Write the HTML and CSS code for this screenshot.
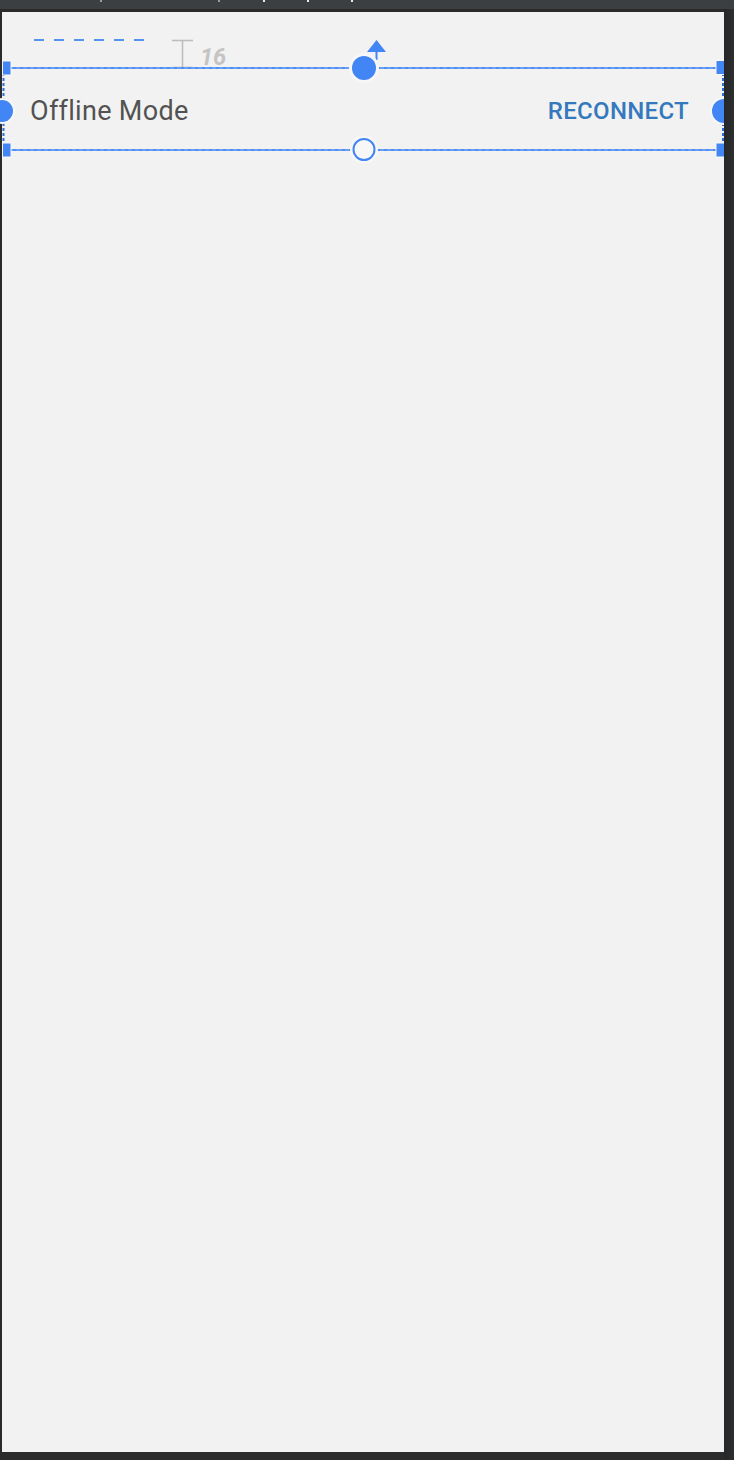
FILE: index.html
```html
<!DOCTYPE html>
<html lang="en">
<head>
<meta charset="utf-8">
<title>Offline Mode preview</title>
<link rel="stylesheet" href="styles.css">
</head>
<body>
<div class="topbar">
  <span class="tick tick-a"></span>
  <span class="tick tick-b"></span>
  <span class="tick tick-c"></span>
  <span class="tick tick-d"></span>
  <span class="tick tick-e"></span>
</div>
<div class="stage">
  <div class="canvas">
    <div class="banner">
      <span class="label">Offline Mode</span>
      <span class="action">RECONNECT</span>
    </div>
    <svg class="overlay" width="722" height="170" viewBox="0 0 722 170" aria-hidden="true">
      <!-- margin guide dashes -->
      <line x1="32" y1="28" x2="142" y2="28" stroke="#5592f5" stroke-width="2" stroke-dasharray="10 10"/>
      <!-- I-beam margin marker -->
      <g stroke="#bdbdbd" stroke-width="1.6">
        <line x1="170" y1="28.5" x2="191" y2="28.5"/>
        <line x1="180.5" y1="28.5" x2="180.5" y2="56"/>
        <line x1="170" y1="55.5" x2="191" y2="55.5"/>
      </g>
      <!-- selection bounds -->
      <line x1="0" y1="56" x2="722" y2="56" stroke="#4f8ff5" stroke-width="2.2"/>
      <line x1="0" y1="56" x2="722" y2="56" stroke="#a9c8fa" stroke-width="0.6" stroke-dasharray="4 3"/>
      <line x1="0" y1="138" x2="722" y2="138" stroke="#4f8ff5" stroke-width="2.2"/>
      <line x1="0" y1="138" x2="722" y2="138" stroke="#a9c8fa" stroke-width="0.6" stroke-dasharray="4 3"/>
      <line x1="1.5" y1="56" x2="1.5" y2="138" stroke="#2f6fd6" stroke-width="2" stroke-dasharray="3 2"/>
      <line x1="721" y1="56" x2="721" y2="138" stroke="#2f6fd6" stroke-width="2" stroke-dasharray="3 2"/>
      <!-- corner handles -->
      <g fill="#4285f4" stroke="#f7f7f7" stroke-width="1">
        <rect x="0.5" y="49" width="8.5" height="14"/>
        <rect x="0.5" y="131" width="8.5" height="14"/>
        <rect x="714" y="48.5" width="8.5" height="14"/>
        <rect x="714" y="131" width="8.5" height="14"/>
      </g>
      <!-- side anchors -->
      <circle cx="0" cy="99" r="13" fill="#f7f7f7"/>
      <circle cx="0" cy="99" r="11" fill="#4285f4"/>
      <circle cx="722" cy="99" r="14" fill="#f7f7f7"/>
      <circle cx="722" cy="99" r="12" fill="#4285f4"/>
      <!-- top anchor with arrow -->
      <polygon points="365,40 384,40 374.5,28" fill="#4285f4"/>
      <rect x="373.5" y="39" width="2" height="9" fill="#4285f4"/>
      <circle cx="362" cy="56" r="15" fill="#f7f7f7"/>
      <circle cx="362" cy="56" r="12" fill="#4285f4"/>
      <!-- bottom anchor -->
      <circle cx="362" cy="137.5" r="14" fill="#f7f7f7"/>
      <circle cx="362" cy="137.5" r="10.5" fill="#f7f7f7" stroke="#4285f4" stroke-width="2"/>
    </svg>
    <span class="margin-value">16</span>
  </div>
</div>
</body>
</html>
```

FILE: styles.css
```css
html, body {
  margin: 0;
  padding: 0;
}

body {
  width: 734px;
  height: 1460px;
  background: #2b2b2b;
  overflow: hidden;
  font-family: Roboto, "Noto Sans", "Liberation Sans", sans-serif;
}

.topbar {
  height: 9px;
  background: #3c3f41;
  display: flex;
  align-items: flex-start;
}

.tick {
  width: 2px;
  height: 2px;
  background: #9a9a9a;
}

.tick-a { margin-left: 100px; }
.tick-b { margin-left: 116px; }
.tick-c { margin-left: 43px; background: #e8e8e8; }
.tick-d { margin-left: 42px; background: #e8e8e8; }
.tick-e { margin-left: 42px; background: #e8e8e8; }

.stage {
  display: flex;
  padding: 3px 10px 8px 2px;
  background: linear-gradient(to right, #2b2b2b 0, #2b2b2b 724px, #262728 724px, #2d2e2f 734px);
}

.canvas {
  position: relative;
  width: 722px;
  height: 1440px;
  background: #f2f2f2;
  clip-path: inset(0 0 0 -4px);
}

.banner {
  margin-top: 56px;
  height: 82px;
  box-sizing: border-box;
  display: flex;
  align-items: center;
  justify-content: space-between;
  padding: 4px 35px 0 28px;
}

.label {
  font-size: 27px;
  color: #525252;
  letter-spacing: 0.3px;
}

.action {
  font-size: 24px;
  font-weight: 500;
  color: #3479bd;
  letter-spacing: 0.3px;
}

.overlay {
  position: absolute;
  left: 0;
  top: 0;
  overflow: visible;
}

.margin-value {
  position: absolute;
  left: 198px;
  top: 31px;
  font-size: 23.5px;
  line-height: 28px;
  font-weight: 700;
  font-style: italic;
  color: #c4c4c4;
}
```
